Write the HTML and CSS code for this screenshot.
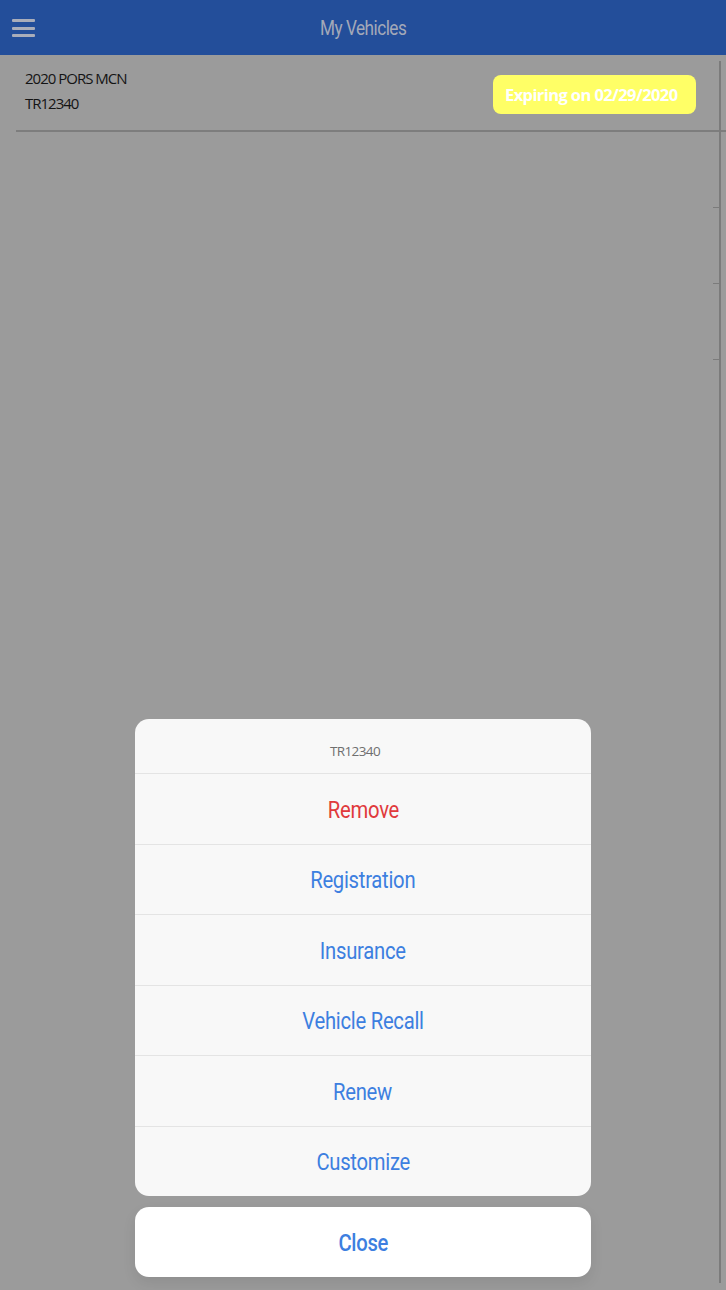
FILE: index.html
```html
<!DOCTYPE html>
<html>
<head>
  <title>My Vehicles</title>
  <link rel="stylesheet" href="styles.css">
</head>
<body>
  <header class="topbar">
    <button class="menu-btn" aria-label="Menu">
      <span></span><span></span><span></span>
    </button>
    <h1 class="title"><span class="narrow">My Vehicles</span></h1>
  </header>

  <main class="vehicle-list">
    <div class="scroll-track">
      <i class="tick t1"></i><i class="tick t2"></i><i class="tick t3"></i>
    </div>
    <div class="vehicle-row">
      <div class="vehicle-info">
        <div class="vehicle-name">2020 PORS MCN</div>
        <div class="vehicle-plate">TR12340</div>
      </div>
      <div class="badge">Expiring on 02/29/2020</div>
    </div>
  </main>

  <div class="sheet-wrap">
    <div class="sheet">
      <div class="sheet-title">TR12340</div>
      <button class="sheet-item danger"><span class="narrow">Remove</span></button>
      <button class="sheet-item"><span class="narrow">Registration</span></button>
      <button class="sheet-item"><span class="narrow">Insurance</span></button>
      <button class="sheet-item"><span class="narrow">Vehicle Recall</span></button>
      <button class="sheet-item"><span class="narrow">Renew</span></button>
      <button class="sheet-item"><span class="narrow">Customize</span></button>
    </div>
    <button class="sheet-close"><span class="narrow">Close</span></button>
  </div>
</body>
</html>
```

FILE: styles.css
```css
body {
  margin: 0;
  height: 1290px;
  background-color: #9b9b9b;
  font-family: Roboto, 'Liberation Sans', sans-serif;
  overflow: hidden;
}

.narrow {
  display: inline-block;
  transform: scaleX(0.88);
}

.topbar {
  height: 55px;
  background-color: #234e9a;
  display: flex;
  align-items: center;
  justify-content: center;
  position: relative;
}

.menu-btn {
  position: absolute;
  left: 12px;
  top: 19px;
  width: 23px;
  height: 18px;
  padding: 0;
  border: none;
  background: none;
  display: flex;
  flex-direction: column;
  justify-content: space-between;
}

.menu-btn span {
  display: block;
  height: 3px;
  border-radius: 1px;
  background-color: #a9adba;
}

.title {
  margin: 0;
  font-family: Roboto, sans-serif;
  font-weight: 400;
  font-size: 20px;
  letter-spacing: -0.6px;
  color: #a3a9b8;
}

.title .narrow {
  transform: scaleX(0.86);
}

.vehicle-list {
  position: relative;
  padding-left: 16px;
}

.scroll-track {
  position: absolute;
  right: 5px;
  top: 6px;
  width: 2px;
  height: 1222px;
  background-color: #7b7b7b;
}

.tick {
  position: absolute;
  right: 0;
  width: 8px;
  height: 1px;
  background-color: #7b7b7b;
}

.t1 { top: 146px; }
.t2 { top: 222px; }
.t3 { top: 298px; }

.vehicle-row {
  display: flex;
  align-items: center;
  justify-content: space-between;
  height: 75px;
  padding: 0 30px 0 9px;
  border-bottom: 2px solid #7d7d7d;
}

.vehicle-info {
  font-family: 'Open Sans', sans-serif;
  font-size: 15px;
  letter-spacing: -1px;
  line-height: 25px;
  color: #141414;
  margin-top: -4px;
}

.badge {
  width: 203px;
  height: 39px;
  box-sizing: border-box;
  padding-left: 12px;
  display: flex;
  align-items: center;
  margin-top: 4px;
  background-color: #ffff66;
  border-radius: 8px;
  color: #ffffff;
  font-family: 'Open Sans', sans-serif;
  font-weight: 700;
  font-size: 16.5px;
  letter-spacing: -0.6px;
}

.sheet-wrap {
  position: absolute;
  left: 135px;
  top: 719px;
  width: 456px;
  display: flex;
  flex-direction: column;
  gap: 11px;
}

.sheet {
  background-color: #f8f8f8;
  border-radius: 14px;
  overflow: hidden;
  display: flex;
  flex-direction: column;
}

.sheet-title {
  height: 54px;
  box-sizing: border-box;
  padding: 10px 16px 0 0;
  display: flex;
  align-items: center;
  justify-content: center;
  font-family: 'Open Sans', sans-serif;
  font-size: 13.5px;
  letter-spacing: -0.6px;
  color: #6f6f6f;
}

.sheet-item {
  height: 70.5px;
  border: none;
  border-top: 1px solid #e4e4e4;
  background: none;
  font-family: Roboto, sans-serif;
  font-size: 23px;
  letter-spacing: -0.3px;
  color: #3d7fe0;
  padding: 3px 0 0;
}

.sheet-item.danger {
  color: #e03a3c;
}

.sheet-close {
  height: 70px;
  border: none;
  border-radius: 14px;
  background-color: #ffffff;
  font-family: Roboto, sans-serif;
  font-weight: 500;
  font-size: 23px;
  letter-spacing: -0.3px;
  color: #3d7fe0;
  padding: 2px 0 0;
  box-shadow: 0 6px 14px rgba(0,0,0,0.08);
}
```
